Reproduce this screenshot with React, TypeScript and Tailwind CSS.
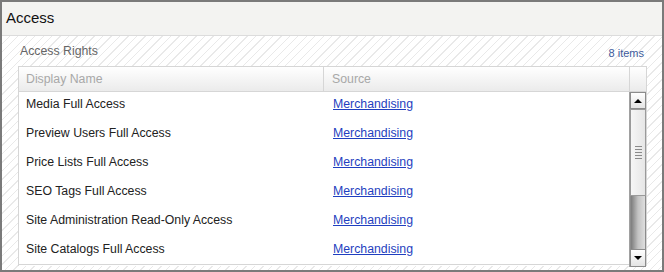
const rows = [
  'Media Full Access',
  'Preview Users Full Access',
  'Price Lists Full Access',
  'SEO Tags Full Access',
  'Site Administration Read-Only Access',
  'Site Catalogs Full Access',
];

function Scrollbar() {
  return (
    <div className="w-[17px] h-full flex flex-col border-l border-[#a0a0a0] bg-[#e9e9e9]">
      <div className="h-[17px] shrink-0 flex items-center justify-center border border-[#8c8c8c] bg-gradient-to-b from-white to-[#e4e4e4]">
        <div className="w-0 h-0 border-l-[4px] border-r-[4px] border-b-[4px] border-l-transparent border-r-transparent border-b-black" />
      </div>
      <div className="h-[87px] shrink-0 flex flex-col items-center justify-center gap-[2px] border border-[#9a9a9a] bg-gradient-to-r from-[#f6f6f6] to-[#e6e6e6]">
        {[0, 1, 2, 3, 4].map(i => (
          <div key={i} className="w-[7px] h-px bg-[#8a8a8a]" />
        ))}
      </div>
      <div className="flex-1 border-x border-[#8c8c8c] bg-gradient-to-r from-[#7d7d7d] via-[#c2c2c2] to-[#dedede]" />
      <div className="h-[18px] shrink-0 flex items-center justify-center border border-[#8c8c8c] bg-gradient-to-b from-white to-[#e4e4e4]">
        <div className="w-0 h-0 border-l-[4px] border-r-[4px] border-t-[4px] border-l-transparent border-r-transparent border-t-black" />
      </div>
    </div>
  );
}

export default function App() {
  return (
    <div className="w-[664px] h-[272px] border-2 border-[#7a7a7a] flex flex-col font-['Liberation_Sans',Arial,sans-serif] overflow-hidden">
      <div className="h-[34px] shrink-0 bg-[#f3f3f1] border-b border-[#dcdcdc] flex items-center pl-[4px]">
        <span className="text-[15px] text-[#111]">Access</span>
      </div>
      <div className="flex-1 pl-4 pr-[15px] bg-[repeating-linear-gradient(135deg,#ffffff_0px,#ffffff_5px,#e9e9e9_5px,#e9e9e9_6px)] flex flex-col">
        <div className="h-[30px] shrink-0 flex items-center justify-between pl-[2px] pr-[3px]">
          <span className="text-[12.3px] text-[#666]">Access Rights</span>
          <span className="text-[11px] text-[#3d5a9c] mt-[4px]">8 items</span>
        </div>
        <div className="border border-[#d6d6d6] border-b-0 bg-white flex flex-col h-[200px]">
          <div className="h-[25px] shrink-0 flex border-b border-[#d6d6d6] bg-gradient-to-b from-white to-[#ebebeb] text-[12.3px] text-[#a8a8a8]">
            <div className="w-[305px] pl-[7px] flex items-center border-r border-[#d6d6d6]">Display Name</div>
            <div className="flex-1 pl-[8px] flex items-center border-r border-[#d6d6d6]">Source</div>
            <div className="w-[16px]" />
          </div>
          <div className="flex flex-1 min-h-0">
            <div className="flex-1 overflow-hidden border-b border-[#d6d6d6] h-[173px]">
              {rows.map(name => (
                <div key={name} className="h-[29px] flex text-[12.3px] leading-[15px] pt-[5px]">
                  <div className="w-[306px] pl-[7px] text-[#222]">{name}</div>
                  <div className="flex-1 pl-[8px]">
                    <a href="#" className="text-[#1f3fc0] underline">Merchandising</a>
                  </div>
                </div>
              ))}
            </div>
            <div className="h-[175px]">
              <Scrollbar />
            </div>
          </div>
        </div>
      </div>
    </div>
  );
}
